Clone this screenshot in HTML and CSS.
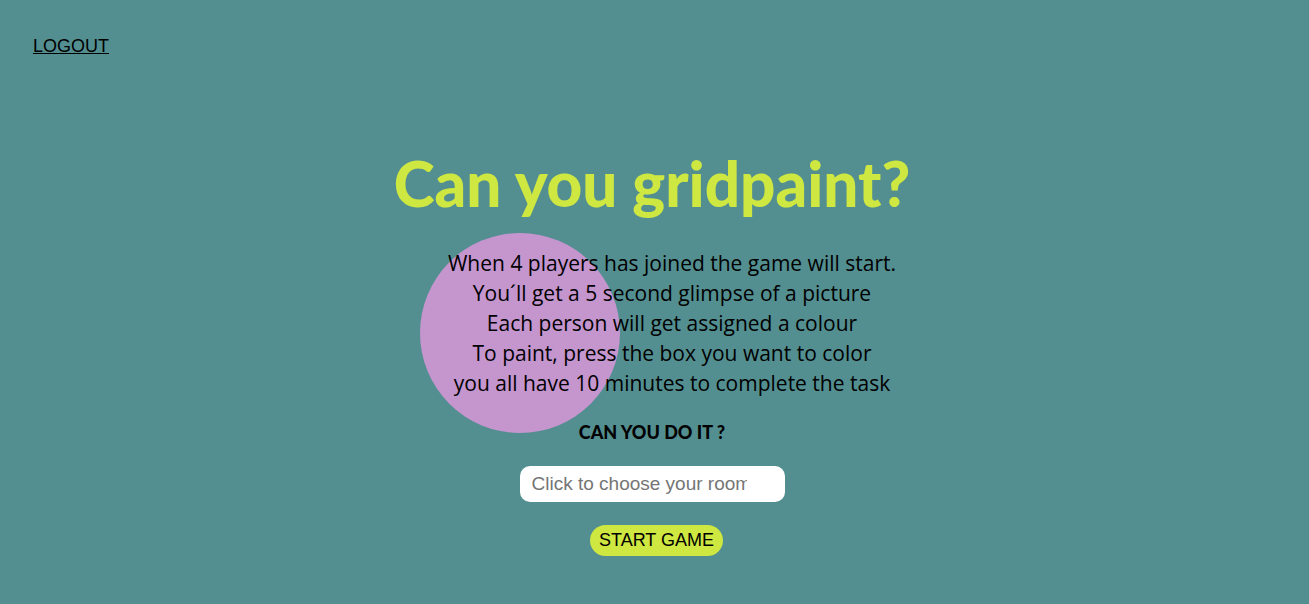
FILE: index.html
```html
<!DOCTYPE html>
<html lang="en">
<head>
<meta charset="utf-8">
<meta name="viewport" content="width=device-width, initial-scale=1">
<title>Gridpaint</title>
<link rel="stylesheet" href="styles.css">
</head>
<body>
<header class="topbar"><a class="logout" href="#">LOGOUT</a></header>
<main class="lobby">
<h1 class="title">Can you gridpaint?</h1>
<section class="rules">
<p class="rules-text">When 4 players has joined the game will start.<br>You´ll get a 5 second glimpse of a picture<br>Each person will get assigned a colour<br>To paint, press the box you want to color<br>you all have 10 minutes to complete the task</p>
</section>
<h2 class="challenge">CAN YOU DO IT ?</h2>
<form class="room-form">
<input class="room-input" type="text" list="rooms" aria-label="Room" placeholder="Click to choose your room">
<datalist id="rooms"><option value="Room 1"></option><option value="Room 2"></option></datalist>
<button class="start" type="button">START GAME</button>
</form>
</main>
</body>
</html>
```
FILE: styles.css
```css
* { box-sizing: border-box; }
body {
  margin: 0;
  min-height: 100vh;
  background: #538f90;
  color: #000;
  font-family: "Liberation Sans", Arial, sans-serif;
}
.topbar { padding: 36px 33px 0; line-height: 21px; font-size: 18px; }
.logout { color: #000; }
.lobby {
  display: flex;
  flex-direction: column;
  align-items: center;
  padding: 86px 5px 48px 0;
}
.title {
  margin: 0;
  color: #cee741;
  font: 900 62px/80px Lato, sans-serif;
  white-space: nowrap;
}
.rules {
  position: relative;
  margin-top: 25px;
  padding-left: 40px;
}
.rules::before {
  content: "";
  position: absolute;
  left: calc(50% - 232px);
  top: -15px;
  width: 200px;
  height: 200px;
  border-radius: 50%;
  background: #c595ce;
}
.rules-text {
  position: relative;
  margin: 0;
  text-align: center;
  font: 21px/30px "Open Sans", sans-serif;
  white-space: nowrap;
}
.challenge { margin: 20px 0 0; font: 900 18px/28px Lato, sans-serif; }
.room-form { display: flex; flex-direction: column; align-items: center; gap: 23px; margin-top: 20px; }
.room-input {
  width: 265px;
  height: 36px;
  padding: 0 12px;
  border: 0;
  border-radius: 10px;
  background: #fff;
  font: 19px "Liberation Sans", Arial, sans-serif;
}
.room-input::placeholder { color: #757575; }
.start {
  margin-left: 9px;
  height: 31px;
  padding: 0 9px;
  border: 0;
  border-radius: 16px;
  background: #cee741;
  color: #000;
  font: 18px "Liberation Sans", Arial, sans-serif;
}
```
